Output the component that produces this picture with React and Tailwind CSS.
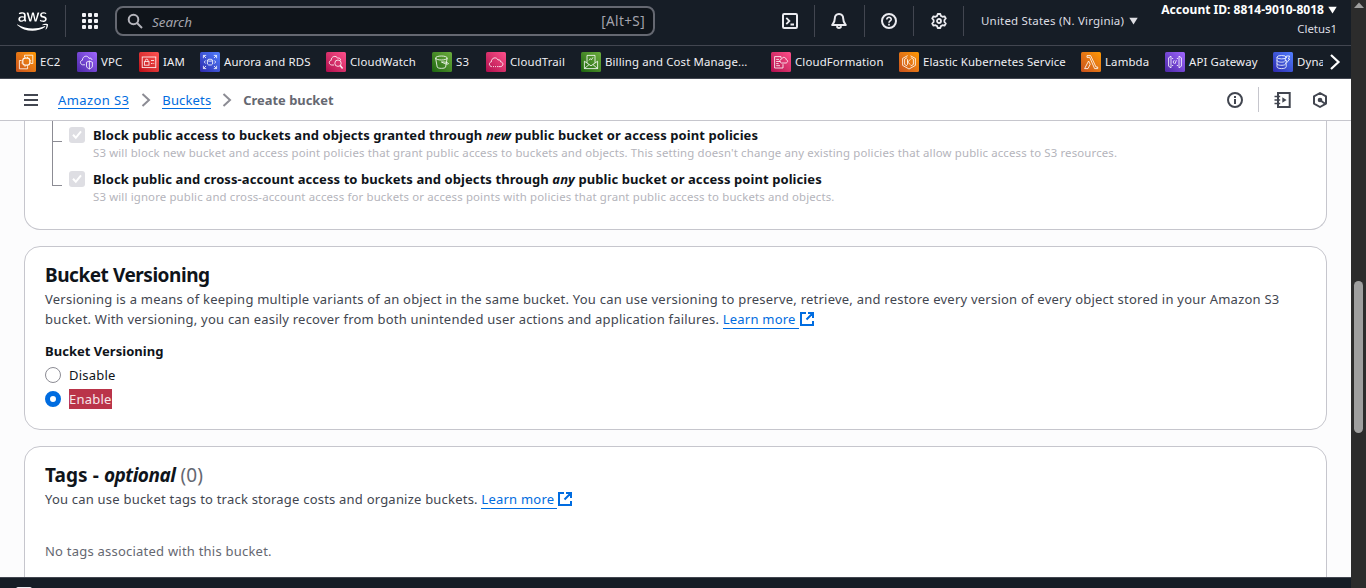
import React from 'react';
import { FaAws } from 'react-icons/fa';

const Line = ({ children, className = '', sw = 2, vb = '0 0 16 16' }) => (
  <svg viewBox={vb} className={`block shrink-0 ${className}`} fill="none" stroke="currentColor" strokeWidth={sw}>
    {children}
  </svg>
);

const glyphs = {
  ec2: <><rect x="6.8" y="6.2" width="7" height="7" rx="2.4" strokeWidth="1.2" /><path d="M8.5 5V3.2H16.8V11.5H15M5.2 8.5H3.4V16.8H11.6V15M9 6V4.8M11.5 6V4.8M9 14.8V13.4M11.5 14.8V13.4M6.6 8.8H5.4M6.6 11H5.4M15.2 8.8H14M15.2 11H14" /></>,
  vpc: <><path d="M8 12.8H5.5C2.6 12 2.9 8.6 5.4 8.2C5.4 4 10.6 2.6 12 6.4C13.6 5.6 14.9 6.5 15 8" /><path d="M9.5 10.2L12.4 9L15.4 10.2V14C15.4 15.6 13.7 16.4 12.4 17C11 16.4 9.5 15.6 9.5 14ZM12.4 9V17" /></>,
  iam: <><rect x="3.2" y="5" width="13.6" height="10.6" /><rect x="5.4" y="9.6" width="4.6" height="3.6" /><path d="M6.4 9.6V8.2C6.4 6.8 9 6.8 9 8.2V9.6M12 8.5H15M12 11.5H13.5M14.4 11.5H15.2" /></>,
  rds: <><path d="M6.2 3.4H3.4V6.2M3.6 3.6L6 6M13.8 3.4H16.6V6.2M16.4 3.6L14 6M3.4 13.8V16.6H6.2M3.6 16.4L6 14M16.6 13.8V16.6H13.8M16.4 16.4L14 14M5.4 8.5L4.4 10L5.4 11.5M14.6 8.5L15.6 10L14.6 11.5" /><ellipse cx="10" cy="8.2" rx="2.6" ry="1" /><path d="M7.4 8.2V12C7.4 13.4 12.6 13.4 12.6 12V8.2" /></>,
  watch: <><path d="M8 13H5.5C2.6 12.4 2.6 8.8 5.2 8.4C5 4.2 10.2 3 11.6 6.2C13.4 5.6 14.6 6.5 14.7 8.2" /><circle cx="12" cy="11.2" r="3.2" /><path d="M14.2 13.6L16.6 16.4" strokeWidth="1.6" /></>,
  s3: <><ellipse cx="9.4" cy="6" rx="5.8" ry="2" /><path d="M3.6 6L5.2 15C5.4 16.8 13.4 16.8 13.6 15L15.2 6M9.4 10C12 11.4 15.8 12.8 16.4 11.8C16.8 11 14.5 9.7 9.4 10" /></>,
  trail: <><path d="M6 14.6H5.6C2.6 14 2.8 10.3 5.4 9.8C5.2 5.6 10.6 4.4 12 8C13.6 7.4 14.6 8.5 14.6 9.8C17.6 10.2 17.6 14 14.8 14.6H12.5" /><path d="M7 14.6H12" strokeDasharray="1 1" /></>,
  bill: <><path d="M3.4 9.2L10 13.8L16.6 9.2V16.6H3.4ZM3.4 16.6L8 12.6M16.6 16.6L12 12.6M6 10.8V3.4H14V10.8" /><path d="M8 8.4L9.3 6.6L10.4 7.8L12 5.4" /></>,
  cf: <><path d="M10 6.2V4.6H3.6V16H12V12.2M5.2 7.4H8M5.2 9.5H9.5M5.2 11.6H7.6M5.2 13.7H9" /><path d="M10.4 11H15C17 10.6 17.2 8 15.2 7.7C15 4.8 11.2 4.6 10.8 7C8.4 7 8.2 10.4 10.4 11Z" /></>,
  eks: <><path d="M8.7 3.6L3.6 6.4V13.4L10 17L16.4 13.4V6.4L11.5 3.8" /><path d="M8.2 5.6L5.6 7.2V12.4L8.2 14M11.8 5.6L14.4 7.2V12.4L11.8 14M8.5 7.2V12.8M8.7 10L11.5 7.2M8.7 10L11.5 12.8" /></>,
  lambda: <path d="M6 3.6H9.6L15 15H16.7V16.6H13.6L8.7 5.4H6ZM7.6 9L3.6 16.6H7L9.2 12.2Z" />,
  api: <><path d="M3.6 5.8L6 4.2V15.8L3.6 14.2ZM16.4 5.8L14 4.2V15.8L16.4 14.2Z" /><path d="M7 6.5H8.2M11.8 6.5H13M7 13.5H8.2M11.8 13.5H13M9.3 8.2L8 10L9.3 11.8M11.4 8.2L10 11.8" /></>,
  dynamo: <><ellipse cx="8.6" cy="5.2" rx="4.6" ry="1.7" /><path d="M4 5.2V14.8C4 17.2 13.2 17.2 13.2 14.8V12M4 8.4C4.4 10.4 10 10.6 11.5 9.6M4 11.6C4.4 13.6 10.5 13.8 12.4 12.4M13.2 5.2V6" /><path d="M13.4 4H16.6L15.4 7H16.8L12.6 12L13.6 8.6H12Z" /></>,
};

const services = [
  ['ec2', 'EC2', 'w-[61px]', 'from-[#c8511b] to-[#ff9900]'],
  ['vpc', 'VPC', 'w-[62px]', 'from-[#4d27a8] to-[#a166ff]'],
  ['iam', 'IAM', 'w-[61px]', 'from-[#bd0816] to-[#ff5252]'],
  ['rds', 'Aurora and RDS', 'w-[126px]', 'from-[#2e27ad] to-[#527fff]'],
  ['watch', 'CloudWatch', 'w-[106px]', 'from-[#b0084d] to-[#ff4f8b]'],
  ['s3', 'S3', 'w-[54px]', 'from-[#1b660f] to-[#6cae3e]'],
  ['trail', 'CloudTrail', 'w-[95px]', 'from-[#b0084d] to-[#ff4f8b]'],
  ['bill', 'Billing and Cost Manage...', 'w-[190px]', 'from-[#1b660f] to-[#6cae3e]'],
  ['cf', 'CloudFormation', 'w-[128px]', 'from-[#b0084d] to-[#ff4f8b]'],
  ['eks', 'Elastic Kubernetes Service', 'w-[182px]', 'from-[#c8511b] to-[#ff9900]'],
  ['lambda', 'Lambda', 'w-[84px]', 'from-[#c8511b] to-[#ff9900]'],
  ['api', 'API Gateway', 'w-[108px]', 'from-[#4d27a8] to-[#a166ff]'],
  ['dynamo', 'DynamoDB', 'w-[90px]', 'from-[#2e27ad] to-[#527fff]'],
];

const Caret = ({ className = '' }) => (
  <svg viewBox="0 0 9 8" className={`block h-[8px] w-[9px] shrink-0 ${className}`} fill="currentColor"><path d="M0.3 0.8H8.7L4.5 7.6Z" /></svg>
);

function TopBar() {
  return (
    <header className="flex h-[46px] shrink-0 items-start border-b border-[#424650] bg-[#161d26] text-[#dedee3]">
      <FaAws className="ml-[17px] mt-[9px] h-[25px] w-[31px] shrink-0 text-white" />
      <div className="ml-[17px] mt-[5px] h-8 w-px shrink-0 bg-[#424650]" />
      <div className="ml-4 mt-[13px] grid shrink-0 grid-cols-3 gap-[2px]">
        {Array.from({ length: 9 }, (_, i) => <i key={i} className="size-[4px] rounded-[1px] bg-[#f3f3f7]" />)}
      </div>
      <div className="ml-[17px] mt-[6px] flex h-[30px] w-[540px] shrink-0 items-center rounded-[8px] border-2 border-[#656871] bg-[#0f141a] pl-[10px] pr-[8px]">
        <Line className="size-4 text-[#b4b4bb]"><circle cx="6.5" cy="6.5" r="4.8" /><path d="M10 10L15 15" /></Line>
        <span className="ml-[9px] pt-[2px] text-[13.4px] italic text-[#a4a4ad]">Search</span>
        <span className="ml-auto text-[13.5px] tracking-[0.4px] text-[#a4a4ad]">[Alt+S]</span>
      </div>
      <div className="ml-[127px] mt-[5px] flex h-8 shrink-0 items-center text-[#ebebf0]">
        <Line className="size-4"><rect x="1" y="1" width="14" height="14" rx="1.2" /><path d="M4.3 4.8L7.4 8L4.3 11.2M8.5 11.5H12" strokeWidth="1.8" /></Line>
        <i className="ml-4 h-8 w-px bg-[#424650]" />
        <Line className="ml-4 size-4"><path d="M8 1C5 1 3.8 3.2 3.8 5.6C3.8 9 2.6 10 1.2 12H14.8C13.4 10 12.2 9 12.2 5.6C12.2 3.2 11 1 8 1Z" strokeLinejoin="round" /><path d="M6 13.2C6.2 15.6 9.8 15.6 10 13.2" /></Line>
        <i className="ml-[17px] h-8 w-px bg-[#424650]" />
        <Line className="ml-4 size-4"><circle cx="8" cy="8" r="7" /><path d="M5.8 6.4C5.8 3.5 10.3 3.6 10.2 6.4C10.1 8 8 7.8 8 9.8M8 10.8V12.6" strokeWidth="1.7" /></Line>
        <i className="ml-4 h-[30px] w-px bg-[#424650]" />
        <Line className="ml-[17px] size-4" sw="1.8"><path d="M6.7 1H9.3L9.9 2.9L11.5 3.8L13.5 3.3L14.8 5.5L13.4 7V9L14.8 10.5L13.5 12.7L11.5 12.2L9.9 13.1L9.3 15H6.7L6.1 13.1L4.5 12.2L2.5 12.7L1.2 10.5L2.6 9V7L1.2 5.5L2.5 3.3L4.5 3.8L6.1 2.9Z" strokeLinejoin="round" /><circle cx="8" cy="8" r="2" /></Line>
        <i className="ml-4 h-[30px] w-px bg-[#424650]" />
      </div>
      <div className="ml-[17px] mt-[11px] flex h-5 w-[157px] shrink-0 items-center justify-between whitespace-nowrap text-[11.5px] tracking-[0.19px]">
        United States (N. Virginia)<Caret />
      </div>
      <div className="ml-auto mr-[14px] flex flex-col items-end whitespace-nowrap">
        <div className="flex h-5 items-center text-[12.05px] font-bold text-white">Account ID: 8814-9010-8018<Caret className="ml-[4px]" /></div>
        <div className="-mt-px h-5 text-[11.4px] leading-5">Cletus1</div>
      </div>
    </header>
  );
}

function ServiceBar() {
  return (
    <nav className="flex h-[33px] shrink-0 items-center border-b border-[#424650] bg-[#161d26] text-[11.4px] tracking-[0.14px] text-[#f0f0f4]">
      <div className="flex w-[1323px] overflow-hidden pl-4">
        {services.map(([id, name, width, tint]) => (
          <div key={id} className={`flex h-5 shrink-0 items-center whitespace-nowrap ${width}`}>
            <span className={`mr-[4px] size-5 shrink-0 rounded-[1.5px] bg-linear-45 text-white/90 ${tint}`}>
              <Line vb="0 0 20 20" sw="0.9" className="size-5">{glyphs[id]}</Line>
            </span>
            {name}
          </div>
        ))}
      </div>
      <Line className="ml-[4px] size-4 text-white" sw="2.2"><path d="M4 1L11.5 8L4 15" /></Line>
    </nav>
  );
}

const Chevron = ({ className = '' }) => (
  <Line className={`size-4 text-[#8c8c94] ${className}`}><path d="M4.5 2L11 8L4.5 14" /></Line>
);

function Crumbs() {
  return (
    <div className="flex h-[42px] shrink-0 items-center border-b border-[#c6c6cd] bg-white text-[#424650]">
      <Line className="ml-[23px] size-4"><path d="M1 3H15M1 8H15M1 13H15" /></Line>
      <a className="ml-[19px] h-[19px] border-b border-[#006ce0] text-[13px] leading-[20px] tracking-[0.4px] text-[#006ce0]">Amazon S3</a>
      <Chevron className="ml-[9px]" />
      <a className="ml-[8px] h-[19px] border-b border-[#006ce0] text-[13px] leading-[20px] tracking-[0.15px] text-[#006ce0]">Buckets</a>
      <Chevron className="ml-[8px]" />
      <span className="ml-[8px] pt-[2px] text-[12.9px] font-bold text-[#656871]">Create bucket</span>
      <Line className="ml-auto size-4"><circle cx="8" cy="8" r="7" /><path d="M8 7V12M8 4V6" /></Line>
      <i className="ml-[15px] h-[25px] w-px bg-[#c6c6cd]" />
      <Line className="ml-[15px] h-4 w-[17px]" vb="0 0 17 16"><path d="M4 1H15.7V15H4M4 0V16" /><path d="M0.5 4.5H6.2M0.5 8H6.2M0.5 11.5H6.2" strokeWidth="1.6" /><path d="M8.3 5.2L12.6 8L8.3 10.8Z" fill="currentColor" stroke="none" /></Line>
      <Line className="ml-[21px] mr-[23px] size-4"><path d="M8 1L14 4.4V11.6L8 15L2 11.6V4.4Z" strokeLinejoin="round" /><circle cx="8" cy="8" r="2.3" fill="currentColor" stroke="none" /><path d="M8.5 8.5L13.5 12" /></Line>
    </div>
  );
}

function PolicyRow({ before, em, after, desc, last }) {
  return (
    <div className="flex">
      <div className={`w-[10px] shrink-0 border-l border-[#8c8c94] ${last ? 'h-[17px] border-b' : 'h-[44px]'}`}>
        {!last && <div className="h-[17px] border-b border-[#8c8c94]" />}
      </div>
      <div className="ml-[7px] mt-[2px] flex size-4 shrink-0 items-center justify-center rounded-[3px] bg-[#dedee3]">
        <Line className="size-4 text-white"><path d="M4 7.8L6.8 10.8L12 4.4" /></Line>
      </div>
      <div className="ml-2 whitespace-nowrap">
        <div className="text-[13px] font-bold leading-5 tracking-[0.08px] text-[#0f141a]">{before} <em>{em}</em> {after}</div>
        <div className="text-[11.4px] leading-4 tracking-[0.15px] text-[#b4b4bb]">{desc}</div>
      </div>
    </div>
  );
}

const LearnMore = () => (
  <a className="inline-flex h-5 items-center align-top text-[#006ce0]">
    <span className="h-[19px] border-b border-[#006ce0] pr-[3px] leading-[18px]">Learn more</span>
    <Line className="size-4"><path d="M7 2H2V14H14V10M9 2H14V7M14 2L7.5 8.5" /></Line>
  </a>
);

function Content() {
  return (
    <main className="flex min-h-0 flex-1 flex-col gap-4 overflow-hidden bg-[#fcfcfd] px-6 text-[13px] leading-5 tracking-[0.225px] text-[#424650]">
      <section className="h-[109px] shrink-0 rounded-b-2xl border border-t-0 border-[#c6c6cd] bg-white pl-[27px]">
        <div className="h-[4px] border-l border-[#8c8c94]" />
        <PolicyRow before="Block public access to buckets and objects granted through" em="new" after="public bucket or access point policies"
          desc="S3 will block new bucket and access point policies that grant public access to buckets and objects. This setting doesn't change any existing policies that allow public access to S3 resources." />
        <PolicyRow last before="Block public and cross-account access to buckets and objects through" em="any" after="public bucket or access point policies"
          desc="S3 will ignore public and cross-account access for buckets or access points with policies that grant public access to buckets and objects." />
      </section>

      <section className="h-[184px] shrink-0 rounded-2xl border border-[#c6c6cd] bg-white px-5 pt-4">
        <h2 className="text-[19px] font-bold leading-6 tracking-[-0.46px] text-[#0f141a]">Bucket Versioning</h2>
        <p className="mt-[2px] whitespace-nowrap">
          <span className="tracking-[0.23px]">Versioning is a means of keeping multiple variants of an object in the same bucket. You can use versioning to preserve, retrieve, and restore every version of every object stored in your Amazon S3</span><br />
          <span className="tracking-[0.217px]">bucket. With versioning, you can easily recover from both unintended user actions and application failures. </span><LearnMore />
        </p>
        <div className="mt-3 font-bold tracking-[0.03px] text-[#0f141a]">Bucket Versioning</div>
        <div className="mt-1 flex items-center gap-2 text-[#0f141a]">
          <span className="size-4 rounded-full border border-[#8c8c94]" />Disable
        </div>
        <div className="mt-1 flex items-center gap-2">
          <span className="size-4 rounded-full border-[5px] border-[#006ce0] bg-white" />
          <span className="bg-[#ba3449] text-[#f6e6e9]">Enable</span>
        </div>
      </section>

      <section className="h-[240px] shrink-0 rounded-2xl border border-[#c6c6cd] bg-white px-5 pt-4">
        <h2 className="text-[19px] font-bold leading-6 tracking-[0.08px] text-[#0f141a]">Tags - <em className="tracking-[-0.48px]">optional</em> <span className="font-normal text-[#656871]">(0)</span></h2>
        <p className="mt-[2px]"><span className="tracking-[0.21px]">You can use bucket tags to track storage costs and organize buckets. </span><LearnMore /></p>
        <p className="mt-8 text-[#656871]">No tags associated with this bucket.</p>
      </section>
    </main>
  );
}

export default function App() {
  return (
    <div className="flex h-[588px] w-[1366px] overflow-hidden font-['Noto_Sans',sans-serif]">
      <div className="flex w-[1351px] flex-col">
        <TopBar />
        <ServiceBar />
        <Crumbs />
        <Content />
        <footer className="h-[11px] shrink-0 overflow-hidden border-t border-[#424650] bg-[#161d26] pl-4 pt-[9px] text-[#ebebf0]">
          <Line className="size-4"><rect x="1" y="1" width="14" height="14" rx="1.2" /></Line>
        </footer>
      </div>
      <div className="flex w-[15px] flex-col items-center bg-[#2c2c2c]">
        <svg viewBox="0 0 10 6" className="mt-[2px] h-[6px] w-[10px]" fill="#9f9f9f"><path d="M0 6L5 0.5L10 6Z" /></svg>
        <div className="mt-[273px] h-[152px] w-[9px] rounded-full bg-[#9f9f9f]" />
      </div>
    </div>
  );
}
